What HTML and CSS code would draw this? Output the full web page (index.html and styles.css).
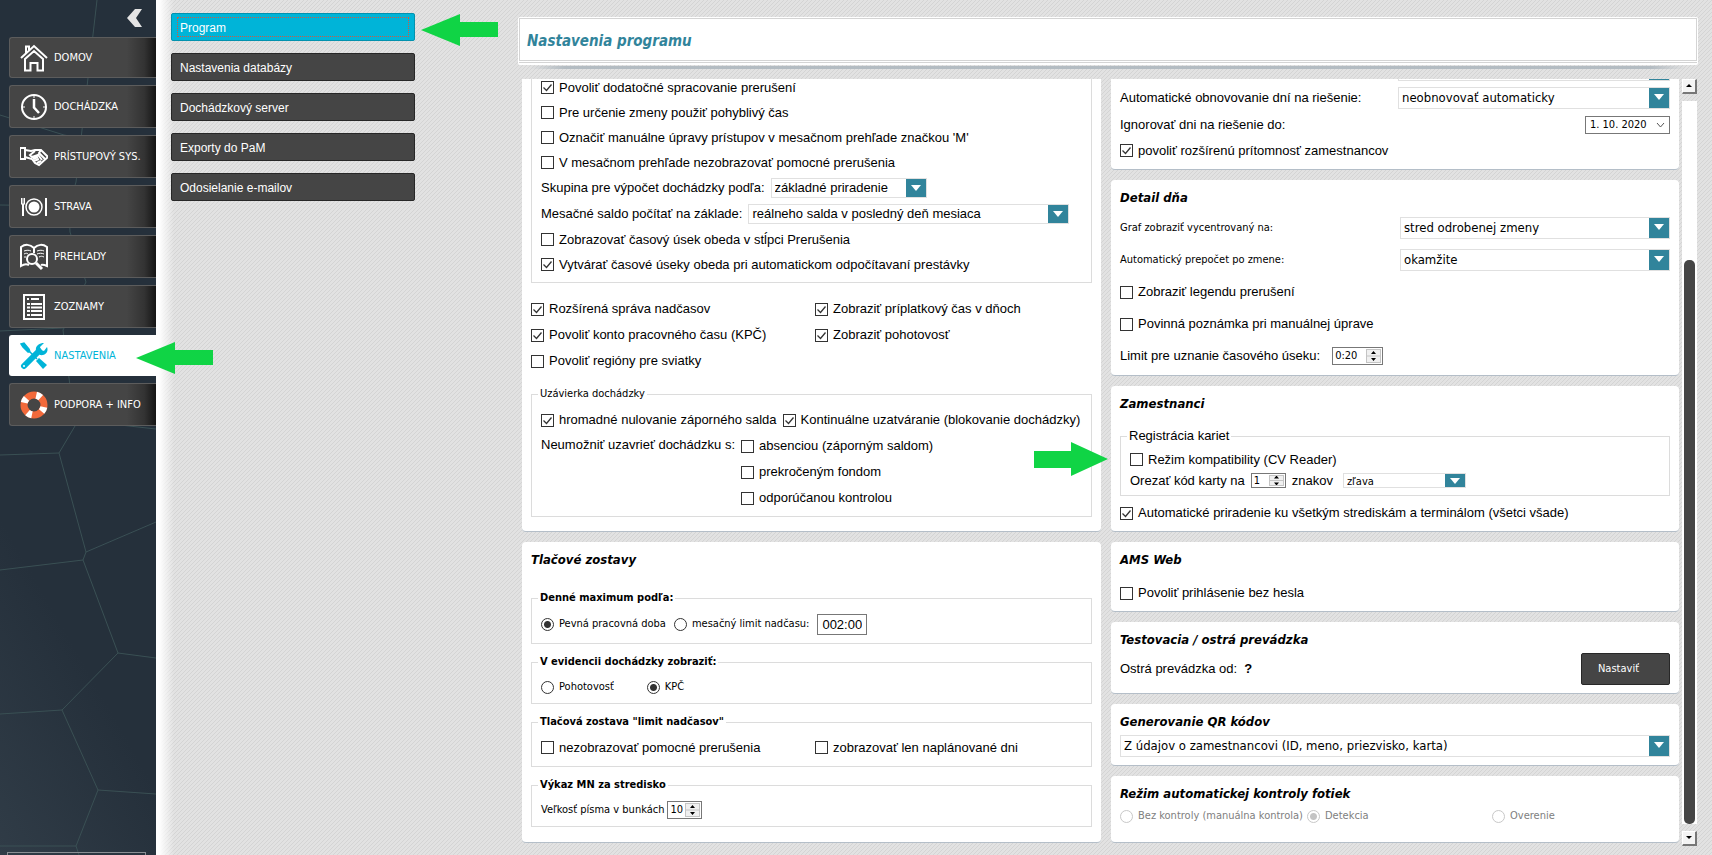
FILE: index.html
```
<!doctype html>
<html lang="sk">
<head>
  <meta charset="utf-8">
  <meta name="viewport" content="width=device-width, initial-scale=1.0">
  <title>Nastavenia programu</title>
  <link rel="stylesheet" href="styles.css">
</head>
<body>

<nav class="sidebar">
  <svg class="sidebar-bg" width="156" height="855" viewBox="0 0 156 855">
    <path d="M97 0L82 130L76 182L69 206L70 232L86 282L63 330L75 426L59 453L86 552L83 560L118 653L62 710L98 790L76 846L79 855
      M0 115L64 135L156 150M0 205L69 206M0 331L63 328L156 310M75 420L156 429M0 455L59 453M86 552L156 522M0 570L83 560
      M118 653L156 658M0 714L62 710M98 790L156 794M0 846H76"/>
  </svg>
  <button type="button" class="collapse" aria-label="Skryť menu">
    <svg width="16" height="18" viewBox="0 0 16 18"><path d="M8 0h7L9 9l6 9H8L0 9z" fill="#e4e4e4"/></svg>
  </button>
  <ul class="menu">
    <li><a href="#" class="short">
      <svg viewBox="0 0 28 28"><path d="M1 14L14 2l13 12M6 9V2.500h3V6M5 15v11.500h5.500V19h7v7.500H23V15L14 7z"/></svg>DOMOV</a></li>
    <li><a href="#">
      <svg viewBox="0 0 28 28"><circle cx="14" cy="14" r="12"/><path d="M14 6v8.500l5 5.500" stroke-width="2.500"/><path d="M14 2v3M14 23v3M2 14h3M23 14h3" stroke-width="1"/></svg>DOCHÁDZKA</a></li>
    <li><a href="#">
      <svg viewBox="0 0 28 28"><path d="M0 5h5v11H0z"/><path d="M5 7l6 1 4-1h6l7 7-9 8-4-2-3-4-7-2" /><path d="M15 8l-5 4 2 2 6-2 4 5M13 16l5-2M14 18l5-2M17 20l4-2M21 7l-2 3 6 6"/></svg>PRÍSTUPOVÝ SYS.</a></li>
    <li><a href="#">
      <svg viewBox="0 0 28 28"><circle cx="14" cy="14" r="8" stroke-width="1.500"/><circle cx="14" cy="14" r="5.500" fill="#fff" stroke="none"/><path d="M3 11v12M26 5v18" stroke-width="2"/><path d="M1.500 5v6M3 5v6M4.500 5v6M1 11h4" stroke-width="1"/></svg>STRAVA</a></li>
    <li><a href="#">
      <svg viewBox="0 0 28 28"><path d="M14 5C10 1 5 1 1 4v19c3-2 6-2 8-1M14 5c4-4 9-4 13-1v19c-2-1-4-2-6-1M14 5v5"/><path d="M4 8c3-1 5-1 7 0M4 11c2-1 3-1 4 0M17 8c3-1 5-1 7 0M17 11c2-1 5-1 7 0M19 14c2-1 3-1 5 0M4 14h2" stroke-width="1"/><circle cx="12" cy="16" r="5"/><path d="M16 20l6 6" stroke-width="3"/></svg>PREHĽADY</a></li>
    <li><a href="#">
      <svg viewBox="0 0 28 28"><path d="M4 2h20v24H4z"/><path d="M7 6h2M11 6h8M7 11h3M11 11h11M7 14.500h3M11 14.500h11M7 18h3M11 18h11M7 22h3M11 22h11"/></svg>ZOZNAMY</a></li>
    <li><a href="#" class="short active">
      <svg viewBox="0 0 28 28"><path d="M1 2l3-1 5 6 1 3-2 0-5-5zM9 9l8 8" fill="#00b4d8" stroke-width="1.500"/><path d="M16 19l3-3 8 7-4 4z" fill="#00b4d8" stroke="none"/><path d="M4 24L19 9" stroke-width="6" stroke-linecap="round"/><path d="M16 9c-1-5 3-8 8-8l-4 4 1 3 3 1 3-4c2 5-2 9-7 8z" fill="#00b4d8" stroke="none"/><circle cx="4" cy="24" r="1" fill="#fff" stroke="none"/></svg>NASTAVENIA</a>
      <svg class="arrow arrow-menu" width="78" height="32" viewBox="0 0 78 32"><path d="M0 16L39 0v8h38v15H39v9z"/></svg></li>
    <li><a href="#">
      <svg viewBox="0 0 28 28"><circle cx="14" cy="14" r="10" stroke="#f2693a" stroke-width="7"/><circle cx="14" cy="14" r="10" stroke-width="7" stroke-dasharray="5 10.700" stroke-dashoffset="-2"/></svg>PODPORA + INFO</a></li>
  </ul>
  <div class="sidebar-box"></div>
</nav>

<main class="main">
  <ul class="subnav">
    <li><button type="button" class="active"><span>Program</span></button>
      <svg class="arrow arrow-sub" width="78" height="32" viewBox="0 0 78 32"><path d="M0 16L39 0v8h38v15H39v9z"/></svg></li>
    <li><button type="button"><span>Nastavenia databázy</span></button></li>
    <li><button type="button"><span>Dochádzkový server</span></button></li>
    <li><button type="button"><span>Exporty do PaM</span></button></li>
    <li><button type="button"><span>Odosielanie e-mailov</span></button></li>
  </ul>

  <section class="content">
    <header class="title"><h1>Nastavenia programu</h1></header>

    <div class="scroller">
      <div class="columns">
        <div class="column">

          <div class="card cut">
            <fieldset class="cut-set">
              <div class="row"><label><input type="checkbox" checked>Povoliť dodatočné spracovanie prerušení</label></div>
              <div class="row"><label><input type="checkbox">Pre určenie zmeny použiť pohyblivý čas</label></div>
              <div class="row"><label><input type="checkbox">Označiť manuálne úpravy prístupov v mesačnom prehľade značkou 'M'</label></div>
              <div class="row"><label><input type="checkbox">V mesačnom prehľade nezobrazovať pomocné prerušenia</label></div>
              <div class="row tall"><label for="skupina">Skupina pre výpočet dochádzky podľa:</label>
                <span class="combo w-group"><select id="skupina"><option>základné priradenie</option></select></span></div>
              <div class="row tall"><label for="saldo">Mesačné saldo počítať na základe:</label>
                <span class="combo w-saldo"><select id="saldo"><option>reálneho salda v posledný deň mesiaca</option></select></span></div>
              <div class="row"><label><input type="checkbox">Zobrazovať časový úsek obeda v stĺpci Prerušenia</label></div>
              <div class="row"><label><input type="checkbox" checked>Vytvárať časové úseky obeda pri automatickom odpočítavaní prestávky</label></div>
            </fieldset>

            <div class="pairs">
              <label><input type="checkbox" checked>Rozšírená správa nadčasov</label>
              <label><input type="checkbox" checked>Zobraziť príplatkový čas v dňoch</label>
              <label><input type="checkbox" checked>Povoliť konto pracovného času (KPČ)</label>
              <label><input type="checkbox" checked>Zobraziť pohotovosť</label>
              <label><input type="checkbox">Povoliť regióny pre sviatky</label>
            </div>

            <fieldset class="closing">
              <legend>Uzávierka dochádzky</legend>
              <div class="row tall">
                <label><input type="checkbox" checked>hromadné nulovanie záporného salda</label>
                <label><input type="checkbox" checked>Kontinuálne uzatváranie (blokovanie dochádzky)</label>
              </div>
              <div class="forbid">
                <span>Neumožniť uzavrieť dochádzku s:</span>
                <div>
                  <div class="row tall"><label><input type="checkbox">absenciou (záporným saldom)</label></div>
                  <div class="row tall"><label><input type="checkbox">prekročeným fondom</label></div>
                  <div class="row tall"><label><input type="checkbox">odporúčanou kontrolou</label></div>
                </div>
              </div>
            </fieldset>
          </div>

          <div class="card prints">
            <h2>Tlačové zostavy</h2>
            <fieldset>
              <legend>Denné maximum podľa:</legend>
              <div class="row small line-38">
                <label><input type="radio" name="max" checked>Pevná pracovná doba</label>
                <label><input type="radio" name="max">mesačný limit nadčasu:</label>
                <input type="text" class="time" value="002:00" aria-label="Limit nadčasu">
              </div>
            </fieldset>
            <fieldset>
              <legend>V evidencii dochádzky zobraziť:</legend>
              <div class="row small line-34 spread">
                <label><input type="radio" name="evid">Pohotovosť</label>
                <label><input type="radio" name="evid" checked>KPČ</label>
              </div>
            </fieldset>
            <fieldset>
              <legend>Tlačová zostava "limit nadčasov"</legend>
              <div class="pairs inner">
                <label><input type="checkbox">nezobrazovať pomocné prerušenia</label>
                <label><input type="checkbox">zobrazovať len naplánované dni</label>
              </div>
            </fieldset>
            <fieldset>
              <legend>Výkaz MN za stredisko</legend>
              <div class="row small line-34">
                <label for="pismo">Veľkosť písma v bunkách</label>
                <span class="spin w-font"><input type="text" id="pismo" value="10"><i></i></span>
              </div>
            </fieldset>
          </div>
        </div>

        <div class="column">
          <div class="card cut days">
            <div class="field"><span></span>
              <span class="combo w-wide"><select aria-label="Dni na riešenie"><option></option></select></span></div>
            <div class="field"><label for="obnova">Automatické obnovovanie dní na riešenie:</label>
              <span class="combo w-wide"><select id="obnova"><option>neobnovovať automaticky</option></select></span></div>
            <div class="field"><label for="ignor">Ignorovať dni na riešenie do:</label>
              <span class="date"><input type="text" id="ignor" value="1. 10. 2020"><svg width="9" height="6" viewBox="0 0 9 6"><path d="M1 1l3.500 4L8 1"/></svg></span></div>
            <div class="row"><label><input type="checkbox" checked>povoliť rozšírenú prítomnosť zamestnancov</label></div>
          </div>

          <div class="card detail">
            <h2>Detail dňa</h2>
            <div class="field small"><label for="graf">Graf zobraziť vycentrovaný na:</label>
              <span class="combo w-detail"><select id="graf"><option>stred odrobenej zmeny</option></select></span></div>
            <div class="field small"><label for="prepocet">Automatický prepočet po zmene:</label>
              <span class="combo w-detail"><select id="prepocet"><option>okamžite</option></select></span></div>
            <div class="row"><label><input type="checkbox">Zobraziť legendu prerušení</label></div>
            <div class="row"><label><input type="checkbox">Povinná poznámka pri manuálnej úprave</label></div>
            <div class="row wide"><label for="limit">Limit pre uznanie časového úseku:</label>
              <span class="spin w-limit"><input type="text" id="limit" value="0:20"><i></i></span></div>
          </div>

          <div class="card staff">
            <h2>Zamestnanci</h2>
            <fieldset>
              <legend>Registrácia kariet</legend>
              <div class="row"><label><input type="checkbox">Režim kompatibility (CV Reader)</label></div>
              <div class="row trim">
                <label for="orez">Orezať kód karty na</label>
                <span class="spin w-trim"><input type="text" id="orez" value="1"><i></i></span>
                <span class="unit">znakov</span>
                <span class="combo w-side"><select aria-label="Strana orezania"><option>zľava</option></select></span>
              </div>
            </fieldset>
            <div class="row tall"><label><input type="checkbox" checked>Automatické priradenie ku všetkým strediskám a terminálom (všetci všade)</label></div>
            <svg class="arrow arrow-card" width="74" height="34" viewBox="0 0 74 34"><path d="M74 17L37 0v9H0v17h37v8z"/></svg>
          </div>

          <div class="card web">
            <h2>AMS Web</h2>
            <div class="row tall"><label><input type="checkbox">Povoliť prihlásenie bez hesla</label></div>
          </div>

          <div class="card mode">
            <h2>Testovacia / ostrá prevádzka</h2>
            <div class="field"><span>Ostrá prevádzka od: &nbsp;<b>?</b></span><button type="button" class="set">Nastaviť</button></div>
          </div>

          <div class="card qr">
            <h2>Generovanie QR kódov</h2>
            <span class="combo"><select aria-label="Generovanie QR kódov"><option>Z údajov o zamestnancovi (ID, meno, priezvisko, karta)</option></select></span>
          </div>

          <div class="card photos">
            <h2>Režim automatickej kontroly fotiek</h2>
            <div class="modes">
              <label><input type="radio" name="foto" disabled>Bez kontroly (manuálna kontrola)</label>
              <label><input type="radio" name="foto" disabled checked>Detekcia</label>
              <label><input type="radio" name="foto" disabled>Overenie</label>
            </div>
          </div>
        </div>
      </div>

      <div class="scrollbar">
        <button type="button" class="up" aria-label="Hore"></button>
        <div class="track"><div class="thumb"></div></div>
        <button type="button" class="down" aria-label="Dole"></button>
      </div>
    </div>
  </section>
</main>

</body>
</html>
```
FILE: styles.css
```
* {
  box-sizing: border-box;
}

body {
  margin: 0;
  height: 100vh;
  display: flex;
  overflow: hidden;
  color: #000;
  font: 13px/16px "Liberation Sans", sans-serif;
}

ul {
  list-style: none;
  margin: 0;
  padding: 0;
}

button, input, select {
  font: inherit;
  color: inherit;
  margin: 0;
  border-radius: 0;
}

/* sidebar */

.sidebar {
  position: relative;
  z-index: 2;
  flex: none;
  width: 156px;
  display: flex;
  flex-direction: column;
  background: linear-gradient(60deg, #303c47, #25303b 30%);
}

.sidebar-bg {
  position: absolute;
  top: 0;
  left: 0;
  fill: none;
  stroke: #3a5054;
}

.collapse {
  position: relative;
  align-self: flex-end;
  width: 16px;
  height: 18px;
  margin: 9px 13px 10px 0;
  padding: 0;
  border: 0;
  background: none;
}

.collapse svg {
  display: block;
}

.menu {
  display: flex;
  flex-direction: column;
  gap: 7px;
  padding-left: 9px;
}

.menu li {
  position: relative;
}

.menu a {
  display: flex;
  align-items: center;
  gap: 6px;
  height: 43px;
  padding: 1px 0 0 10px;
  border: 1px solid #5c5c5c;
  border-right: 0;
  border-radius: 3px 0 0 3px;
  background: linear-gradient(90deg, #454545 80%, #333 92%, #151515);
  color: #fff;
  font: 11px/14px "DejaVu Sans Condensed", sans-serif;
  text-decoration: none;
  white-space: nowrap;
}

.menu a.short {
  height: 41px;
}

.menu a.active {
  background: #fff;
  border-color: #fff;
  color: #00b4d8;
}

.menu a svg {
  flex: none;
  width: 28px;
  height: 28px;
  fill: none;
  stroke: #fff;
  stroke-width: 2;
}

.menu a.active svg {
  stroke: #00b4d8;
}

.sidebar-box {
  position: relative;
  height: 3px;
  margin: auto 10px 0 7px;
  border: 1px solid #8a8f94;
  border-bottom: 0;
}

.arrow {
  position: absolute;
  z-index: 3;
  fill: #10d445;
}

.arrow-menu {
  left: 127px;
  top: 7px;
}

.arrow-sub {
  left: 250px;
  top: 1px;
}

.arrow-card {
  left: -77px;
  top: 56px;
}

/* page */

.main {
  flex: 1;
  min-width: 0;
  display: flex;
  padding: 0 14px 0 15px;
  background:
    linear-gradient(90deg, #fff 3px, rgba(255, 255, 255, 0) 18px),
    url("data:image/svg+xml,%3Csvg xmlns='http://www.w3.org/2000/svg' width='4' height='4'%3E%3Cpath d='M-1 1L1-1M0 4L4 0M3 5L5 3' stroke='%23d4d4d4'/%3E%3C/svg%3E")
    #e2e2e2;
}

.subnav {
  flex: none;
  width: 347px;
  padding-top: 13px;
  display: flex;
  flex-direction: column;
  gap: 12px;
}

.subnav li {
  position: relative;
}

.subnav button {
  display: block;
  width: 244px;
  height: 28px;
  padding: 3px 5px;
  border: 1px solid #272727;
  border-radius: 2px;
  background: #454545;
  color: #fff;
  font-size: 12px;
  text-align: left;
}

.subnav span {
  display: block;
  padding: 2px 2px 0;
  border: 1px dotted transparent;
}

.subnav .active {
  border-color: #0392ae;
  background: #00b4d8;
}

.subnav .active span {
  border-color: #d05a40;
}

.content {
  flex: 1;
  min-width: 0;
  display: flex;
  flex-direction: column;
  padding: 17px 0 9px;
}

.title {
  position: relative;
  flex: none;
  height: 48px;
  padding: 1px 1px 4px;
  border-radius: 2px;
  background: #fff;
}

.title::before {
  content: "";
  position: absolute;
  left: 1px;
  right: 1px;
  bottom: 2px;
  border-bottom: 1px solid #d4d4d4;
}

.title::after {
  content: "";
  position: absolute;
  left: 12px;
  right: 12px;
  top: 49px;
  height: 3px;
  background: linear-gradient(90deg, transparent, #b4bcc2 3%, #b4bcc2 97%, transparent);
}

.title h1 {
  height: 43px;
  margin: 0;
  padding-left: 7px;
  border: 1px solid #d4d4d4;
  color: #31849b;
  font: italic bold 15px/44px "DejaVu Sans Condensed", sans-serif;
}

.scroller {
  flex: 1;
  min-height: 0;
  display: flex;
  gap: 3px;
  margin-top: 14px;
  padding: 0 1px 0 4px;
}

.columns {
  flex: 1;
  min-width: 0;
  display: grid;
  grid-template-columns: 579fr 568fr;
  gap: 10px;
  align-items: start;
  overflow: clip;
}

.column {
  min-width: 0;
  display: flex;
  flex-direction: column;
  gap: 10px;
}

.card {
  position: relative;
  padding: 9px;
  border-bottom: 1px solid #b4bec8;
  border-radius: 4px;
  background: #fff;
}

.cut {
  border-radius: 0 0 4px 4px;
  padding-top: 0;
}

h2 {
  margin: 0;
  font: italic bold 13px/18px "DejaVu Sans Condensed", sans-serif;
}

fieldset {
  min-width: 0;
  margin: 0;
  padding: 0 9px;
  border: 1px solid #dcdcdc;
}

legend {
  height: 14px;
  margin-left: -3px;
  padding: 0 2px;
  font: 11px/14px "DejaVu Sans Condensed", sans-serif;
}

label {
  display: inline-flex;
  align-items: center;
  gap: 5px;
  white-space: nowrap;
}

.row {
  display: flex;
  align-items: center;
  gap: 6px;
  height: 25px;
}

.tall {
  height: 26px;
}

.small {
  font: 11px/14px "DejaVu Sans Condensed", sans-serif;
}

.field {
  display: flex;
  align-items: center;
  justify-content: space-between;
}

/* controls */

input[type=checkbox], input[type=radio] {
  appearance: none;
  flex: none;
  width: 13px;
  height: 13px;
  border: 1px solid #333;
  background: #fff;
}

input[type=checkbox]:checked {
  background: url("data:image/svg+xml,%3Csvg xmlns='http://www.w3.org/2000/svg' width='11' height='11'%3E%3Cpath d='M1.500 5.500l3 3L9.500 2.500' fill='none' stroke='%23333' stroke-width='1.300'/%3E%3C/svg%3E") center no-repeat;
}

input[type=radio] {
  border-radius: 50%;
}

input[type=radio]:checked {
  background: radial-gradient(circle, #333 3px, #fff 4px);
}

input[type=radio]:disabled {
  border-color: #c8c8c8;
}

input[type=radio]:disabled:checked {
  background: radial-gradient(circle, #c4c4c4 3px, #fff 4px);
}

.combo {
  position: relative;
  display: flex;
  height: 20px;
  border: 1px solid #e0e0e0;
  background: #fff;
}

.combo select {
  appearance: none;
  flex: 1;
  min-width: 0;
  padding: 0 22px 0 3px;
  border: 0;
  background: none;
}

.combo::before {
  content: "";
  position: absolute;
  top: 0;
  right: 0;
  bottom: 0;
  width: 20px;
  background: #31849b;
  pointer-events: none;
}

.combo::after {
  content: "";
  position: absolute;
  top: 6px;
  right: 5px;
  border: 5px solid transparent;
  border-top: 6px solid #fff;
  border-bottom: 0;
  pointer-events: none;
}

.w-group { width: 156px; }
.w-saldo { width: 321px; }
.w-wide { width: 272px; }
.w-detail { width: 270px; }
.w-side { width: 123px; }
.w-font { width: 35px; }
.w-limit { width: 51px; }
.w-trim { width: 35px; }

.column + .column .combo {
  height: 22px;
  font: 13px/16px "DejaVu Sans Condensed", sans-serif;
}

.spin {
  display: flex;
  height: 18px;
  border: 1px solid #777;
  background: #fff;
  font: 11px/14px "DejaVu Sans Condensed", sans-serif;
}

.spin input {
  flex: 1;
  min-width: 0;
  padding: 0 0 0 2px;
  border: 0;
  background: none;
}

.spin i {
  width: 15px;
  margin: 1px;
  border: 1px solid #c4c4c4;
  background:
    url("data:image/svg+xml,%3Csvg xmlns='http://www.w3.org/2000/svg' width='13' height='12'%3E%3Cpath d='M4 4L6.500 1L9 4zM4 8L6.500 11L9 8z'/%3E%3Cpath d='M0 6h13' stroke='%23c4c4c4'/%3E%3C/svg%3E") center no-repeat #f0f0f0;
}

.time {
  width: 50px;
  height: 21px;
  padding: 0 4px;
  border: 1px solid #777;
  font: 13px/16px "Liberation Sans", sans-serif;
}

.date {
  display: flex;
  align-items: center;
  width: 85px;
  height: 18px;
  padding-right: 4px;
  border: 1px solid #777;
  font: 11px/14px "DejaVu Sans Condensed", sans-serif;
}

.date input {
  flex: 1;
  min-width: 0;
  padding: 0 0 0 4px;
  border: 0;
}

.date svg {
  fill: none;
  stroke: #555;
}

.set {
  width: 89px;
  height: 32px;
  padding: 0 24px 0 10px;
  border: 1px solid #272727;
  border-radius: 2px;
  background: #454545;
  color: #fff;
  font: 11px/14px "DejaVu Sans Condensed", sans-serif;
}

/* left column */

.cut-set {
  margin-top: -4px;
  padding-bottom: 5px;
  border-top: 0;
}

.pairs {
  display: grid;
  grid-template-columns: 284px 1fr;
  grid-auto-rows: 26px;
  margin: 13px 0;
}

.closing {
  padding: 6px 9px 5px;
}

.cut:has(.closing) {
  padding-bottom: 14px;
}

.forbid {
  display: flex;
  gap: 6px;
  line-height: 24px;
}

.prints h2 {
  margin-bottom: 22px;
}

.prints fieldset + fieldset {
  margin-top: 11px;
}

.prints legend {
  font-weight: bold;
}

.prints {
  padding-bottom: 15px;
}

.prints .pairs {
  grid-template-columns: 274px 1fr;
  grid-auto-rows: 37px;
  margin: 0;
}

.line-38 {
  height: 38px;
  gap: 8px;
}

.line-34 {
  height: 36px;
  margin-bottom: -2px;
}

.line-34:not(.spread) {
  gap: 3px;
}

.spread {
  gap: 33px;
}

/* right column */

.days {
  padding-bottom: 6px;
}

.days .field {
  height: 27px;
}

.days .field:first-child {
  height: 22px;
  margin: -20px 0 3px;
}

.detail h2 {
  margin-bottom: 5px;
}

.detail {
  padding-bottom: 3px;
}

.detail .row, .detail .field {
  height: 32px;
}

.detail .wide {
  gap: 12px;
}

.staff h2 {
  margin-bottom: 16px;
}

.staff fieldset {
  margin-bottom: 4px;
  padding: 4px 9px 6px;
}

.staff legend {
  font: 13px/14px "Liberation Sans", sans-serif;
}

.staff {
  padding-bottom: 5px;
}

.staff .trim {
  height: 17px;
  gap: 6px;
}

.trim .spin, .column + .column .trim .combo {
  height: 15px;
  font-size: 11px;
}

.trim .combo::after {
  top: 4px;
}

.trim .unit {
  margin-right: 4px;
}

.web h2 {
  margin-bottom: 11px;
}

.web {
  padding-bottom: 5px;
}

.mode h2, .qr h2 {
  margin-bottom: 4px;
}

.mode, .qr {
  padding-bottom: 8px;
}

.modes {
  display: grid;
  grid-template-columns: 187px 185px 1fr;
  align-items: center;
  height: 26px;
  color: #808080;
  font: 11px/14px "DejaVu Sans Condensed", sans-serif;
}

.photos {
  padding-bottom: 13px;
}

/* scrollbar */

.scrollbar {
  flex: none;
  width: 15px;
  display: flex;
  flex-direction: column;
  gap: 7px;
}

.scrollbar button {
  position: relative;
  height: 15px;
  padding: 0;
  border: 1px solid #fff;
  border-right: 2px solid #777;
  border-bottom: 2px solid #777;
  background: #f4f4f4;
}

.scrollbar button::after {
  content: "";
  position: absolute;
  top: 4px;
  left: 3px;
  border: 3px solid transparent;
}

.scrollbar .up::after {
  border-top: 0;
  border-bottom-color: #000;
}

.scrollbar .down::after {
  border-bottom: 0;
  border-top-color: #000;
}

.track {
  flex: 1;
  display: flex;
  flex-direction: column;
  justify-content: flex-end;
  padding: 0 2px;
  background: #fff;
}

.thumb {
  height: 78%;
  border-radius: 5px;
  background: #454545;
}
```
